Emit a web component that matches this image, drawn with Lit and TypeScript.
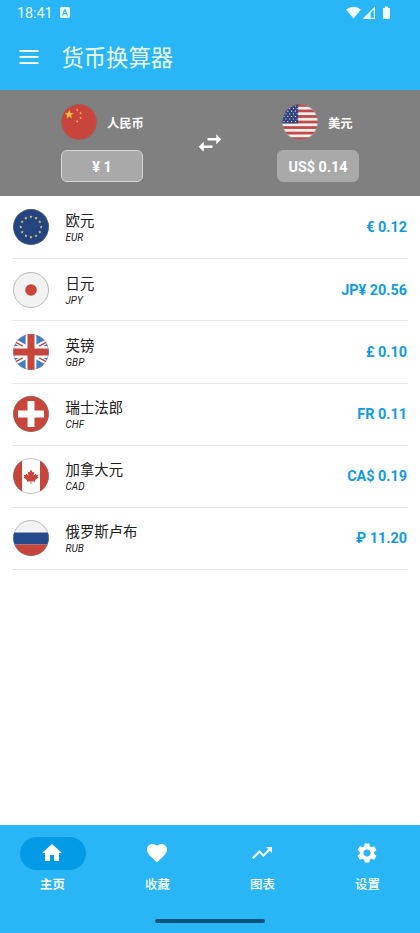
import { LitElement, html, svg, css } from "lit";
import { customElement, property } from "lit/decorators.js";

const star = (cx: number, cy: number, r: number, rot = -90) => {
  const pts: string[] = [];
  for (let i = 0; i < 10; i++) {
    const a = ((rot + i * 36) * Math.PI) / 180;
    const d = i % 2 ? r * 0.42 : r;
    pts.push(`${(cx + d * Math.cos(a)).toFixed(2)},${(cy + d * Math.sin(a)).toFixed(2)}`);
  }
  return pts.join(" ");
};

const RED = "#c8453c";
const NAVY = "#24447f";

// Every flag is drawn on a 36 x 36 canvas and clipped to a circle.
const flags: Record<string, unknown> = {
  CNY: svg`<rect width="36" height="36" fill=${RED}/>
    <polygon points=${star(8.2, 10.6, 4.7)} fill="#f9c03c"/>
    ${[[16.2, 6, -60], [19.5, 9.2, -80], [19.5, 14, -100], [16.2, 17.4, -70]].map(
      ([x, y, r]) => svg`<polygon points=${star(x, y, 1.6, r)} fill="#f9b03c"/>`)}`,
  USD: svg`<rect width="36" height="36" fill="#f6f1f0"/>
    ${[0, 1, 2, 3, 4, 5, 6].map((i) => svg`<rect y=${i * 5.54} width="36" height="2.77" fill="#c04a48"/>`)}
    <rect width="16.2" height="19.4" fill="#33457c"/>
    ${[0, 1, 2, 3, 4, 5, 6].map((r) => [0, 1, 2, 3].map((c) =>
      svg`<circle cx=${2 + c * 3.8 + (r % 2 ? 1.9 : 0)} cy=${2 + r * 2.6} r="0.62" fill="#e8ebf5"/>`))}`,
  EUR: svg`<rect width="36" height="36" fill=${NAVY}/>
    ${Array.from({ length: 12 }, (_, i) => {
      const a = (i * Math.PI) / 6;
      return svg`<polygon points=${star(18 + 10.2 * Math.sin(a), 18 - 10.2 * Math.cos(a), 1.7)} fill="#e2d36a"/>`;
    })}`,
  JPY: svg`<rect width="36" height="36" fill="#f2f2f2"/><circle cx="18" cy="18" r="5.8" fill=${RED}/>`,
  GBP: svg`<rect width="36" height="36" fill="#fff"/>
    ${["", "translate(36 0) scale(-1 1)", "translate(0 36) scale(1 -1)", "translate(36 36) scale(-1 -1)"].map(
      (t) => svg`<g transform=${t}>
        <path d="M12.6 10.600V0H5L3.200 5.400zM0 8.800L5.800 12H0z" fill="#3d7fc0"/>
        <path d="M1.500 7.600L9.800 12.200" stroke=${RED} stroke-width="1.500"/>
      </g>`)}
    <path d="M14.500 0h7v14.500H36v7H21.500V36h-7V21.500H0v-7h14.500z" fill=${RED}/>`,
  CHF: svg`<rect width="36" height="36" fill=${RED}/><path d="M14.500 5h7v9.500H31v7h-9.500V31h-7v-9.500H5v-7h9.500z" fill="#fff"/>`,
  CAD: svg`<rect width="36" height="36" fill="#fff"/>
    <path d="M0 0h9v36H0zM27 0h9v36h-9z" fill=${RED}/>
    <path d="M18 11.500l1.600 2.900 1.700-.8-.7 4.200 2.200-2.200.5 1.300 2.100-.3-.8 2.200.9.600-3.600 2.900.4 1.400-3.900-.5v2.900h-.8v-2.900l-3.900.5.400-1.400-3.600-2.900.900-.600-.800-2.200 2.100.300.500-1.300 2.200 2.200-.700-4.200 1.700.800z" fill=${RED}/>`,
  RUB: svg`<rect width="36" height="12.500" fill="#f2f2f2"/><rect y="12.500" width="36" height="12" fill="#244a8c"/><rect y="24.500" width="36" height="11.500" fill=${RED}/>`,
};

@customElement("round-flag")
class RoundFlag extends LitElement {
  @property() code = "";
  static styles = css`
    :host { display: block; width: 36px; height: 36px; flex: none; }
    svg { display: block; }
  `;
  render() {
    return html`<svg width="36" height="36" viewBox="0 0 36 36">
      <defs><clipPath id="disc"><circle cx="18" cy="18" r="17.900"/></clipPath></defs>
      <g clip-path="url(#disc)">${flags[this.code]}</g>
      <circle cx="18" cy="18" r="17.500" fill="none" stroke="#777" stroke-opacity=".5" stroke-width=".9"/>
    </svg>`;
  }
}

const rates = [
  ["EUR", "欧元", "€ 0.12"],
  ["JPY", "日元", "JP¥ 20.56"],
  ["GBP", "英镑", "£ 0.10"],
  ["CHF", "瑞士法郎", "FR 0.11"],
  ["CAD", "加拿大元", "CA$ 0.19"],
  ["RUB", "俄罗斯卢布", "₽ 11.20"],
];

const tabs = [
  ["主页", "M10 20v-6h4v6h5v-8h3L12 3 2 12h3v8z"],
  ["收藏", "M12 21.350l-1.450-1.320C5.400 15.360 2 12.280 2 8.500 2 5.420 4.420 3 7.500 3c1.740 0 3.410.810 4.500 2.090C13.090 3.810 14.760 3 16.500 3 19.580 3 22 5.420 22 8.500c0 3.780-3.400 6.860-8.550 11.540L12 21.350z"],
  ["图表", "M16 6l2.290 2.290-4.880 4.880-4-4L2 16.590 3.410 18l6-6 4 4 6.300-6.290L22 12V6z"],
  ["设置", "M19.140 12.940c.040-.300.060-.610.060-.940 0-.320-.020-.640-.070-.940l2.030-1.580c.180-.140.230-.410.120-.610l-1.920-3.320c-.120-.220-.370-.290-.590-.220l-2.390.960c-.500-.380-1.030-.700-1.620-.940L14.400 2.810c-.040-.240-.240-.410-.480-.410h-3.840c-.240 0-.430.170-.470.410L9.250 5.350C8.660 5.590 8.120 5.920 7.630 6.290L5.240 5.330c-.220-.080-.470 0-.590.220L2.740 8.870c-.120.210-.080.470.120.610l2.030 1.580c-.050.300-.090.630-.090.940s.020.640.070.940l-2.030 1.580c-.180.140-.230.410-.120.610l1.920 3.320c.120.220.370.290.590.220l2.390-.960c.500.380 1.030.700 1.620.940l.360 2.540c.050.240.240.410.480.410h3.840c.240 0 .440-.170.470-.410l.360-2.540c.590-.240 1.130-.560 1.620-.940l2.390.960c.220.080.470 0 .590-.220l1.920-3.320c.120-.220.070-.470-.120-.610l-2.010-1.580zM12 15.600c-1.980 0-3.600-1.620-3.600-3.600s1.620-3.600 3.600-3.600 3.600 1.620 3.600 3.600-1.620 3.600-3.600 3.600z"],
];

@customElement("app-root")
class AppRoot extends LitElement {
  static styles = css`
    :host {
      display: flex; flex-direction: column; height: 933px; background: #fff; overflow: hidden;
      font-family: Roboto, "Noto Sans CJK SC", sans-serif; color: #202020;
    }
    * { box-sizing: border-box; }
    svg { display: block; flex: none; }
    header { height: 90px; flex: none; background: #29b6f6; color: #eefbff; }
    .status { height: 25px; padding: 0 28px 0 17px; display: flex; align-items: center; font-size: 14.3px; }
    .status .keyboard { margin-left: 7px; }
    .status .signals { margin-left: auto; }
    .bar { height: 65px; display: flex; align-items: center; padding: 0 0 1px 18.500px; gap: 23px; }
    h1 { margin: 0; padding-top: 2px; font-size: 22.300px; font-weight: 400; line-height: 30px; }
    .panel {
      height: 106px; flex: none; background: #808080; color: #fff; padding: 14px 61px 0;
      display: flex; justify-content: space-between;
    }
    .side { width: 82px; display: flex; flex-direction: column; gap: 10px; }
    .who { height: 36px; display: flex; align-items: center; gap: 10px; font-size: 12.300px; font-weight: 700; white-space: nowrap; }
    .who span { padding-top: 2px; }
    .amount {
      height: 32px; border-radius: 6px; background: #a9a9a9; display: flex; align-items: center;
      justify-content: center; font-size: 14.400px; font-weight: 700; border: 1px solid #a9a9a9; padding-top: 2px;
    }
    .active { border-color: #d6d6d6; }
    .to .who { padding-left: 5px; }
    .swap { margin-top: 24px; }
    main { flex: 1; padding: 0 12px; }
    .row {
      height: 62.150px; display: flex; align-items: center; border-bottom: 1px solid #e6e6e6;
      padding: 0 1px;
    }
    .row:first-child { height: 63.300px; }
    .text { margin-left: 16.500px; flex: 1; padding-top: 2px; }
    .name { font-size: 14.400px; line-height: 19px; }
    .code { font-size: 10px; line-height: 13px; font-style: italic; }
    .value { font-size: 14.400px; font-weight: 700; color: #0f9be3; padding-top: 1px; }
    nav { height: 108px; flex: none; background: #29b6f6; color: #fff; padding-top: 12px; display: flex; flex-direction: column; }
    .tabs { display: grid; grid-template-columns: repeat(4, 1fr); justify-items: center; }
    .tab { display: flex; flex-direction: column; align-items: center; gap: 6px; font-size: 12.400px; font-weight: 500; line-height: 18px; }
    .pill { width: 66px; height: 33px; border-radius: 17px; display: flex; align-items: center; justify-content: center; padding: 0 1px 1px 0; }
    .on .pill { background: #039be5; }
    .on { font-weight: 700; }
    .handle { width: 110px; height: 4px; border-radius: 2px; background: #075478; margin: auto auto 10.500px; }
  `;
  render() {
    return html`
      <header>
        <div class="status">
          <span>18:41</span>
          <svg class="keyboard" width="10" height="11" viewBox="0 0 10 11">
            <path fill-rule="evenodd" fill="currentColor" d="M1 0h8l1 1v9l-1 1H1l-1-1V1zM4.200 2.500L2 8.500h1.300l.5-1.400h2.400l.5 1.400H8l-2.200-6zM5 3.900l.8 2.200H4.200z"/>
          </svg>
          <svg class="signals" width="46" height="14" viewBox="0 0 46 14" fill="currentColor">
            <path d="M0 3.500Q7.500 -2 15 3.500L7.500 12.500z"/>
            <path fill-rule="evenodd" d="M29 0.500V13H16.500zM27.700 3.700V11.700H24.500V6.900z"/>
            <path d="M37 2h1.800V.500h3.400V2H44v10.200l-.8.800h-5.400l-.8-.8z"/>
          </svg>
        </div>
        <div class="bar">
          <svg width="20" height="16" viewBox="0 0 20 16" fill="currentColor"><path d="M.500 1h19v2H.500zM.500 7h19v2H.500zM.500 13h19v2H.500z"/></svg>
          <h1>货币换算器</h1>
        </div>
      </header>
      <section class="panel">
        <div class="side">
          <div class="who"><round-flag code="CNY"></round-flag><span>人民币</span></div>
          <div class="amount active">¥ 1</div>
        </div>
        <svg class="swap" width="30" height="30" viewBox="0 0 24 24" fill="#fff"><path d="M6.990 11L3 15l3.990 4v-3H14v-2H6.990v-3zM21 9l-3.990-4v3H10v2h7.010v3L21 9z"/></svg>
        <div class="side to">
          <div class="who"><round-flag code="USD"></round-flag><span>美元</span></div>
          <div class="amount">US$ 0.14</div>
        </div>
      </section>
      <main>
        ${rates.map(([code, name, value]) => html`
          <div class="row">
            <round-flag code=${code}></round-flag>
            <div class="text"><div class="name">${name}</div><div class="code">${code}</div></div>
            <div class="value">${value}</div>
          </div>`)}
      </main>
      <nav>
        <div class="tabs">
          ${tabs.map(([label, d], i) => html`
            <div class="tab ${i === 0 ? "on" : ""}">
              <div class="pill"><svg width="24" height="24" viewBox="0 0 24 24" fill="#fff"><path d=${d}/></svg></div>
              ${label}
            </div>`)}
        </div>
        <div class="handle"></div>
      </nav>`;
  }
}
